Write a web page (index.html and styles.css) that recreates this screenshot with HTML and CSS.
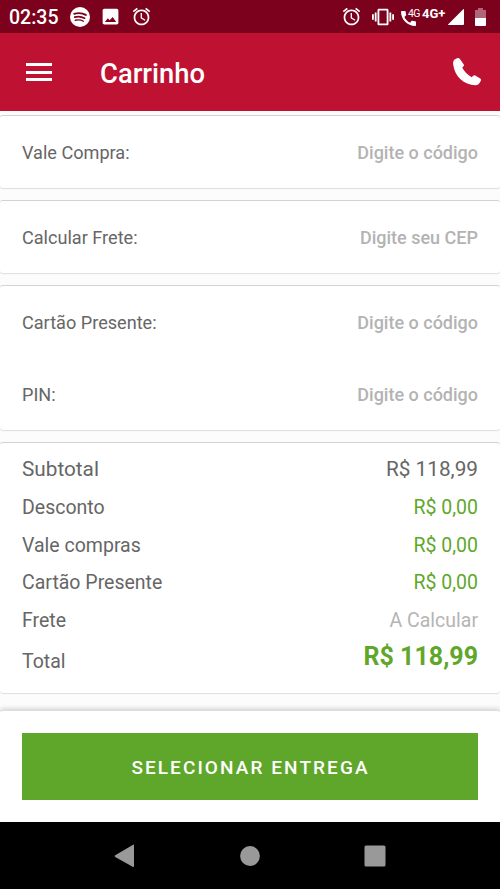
FILE: index.html
```html
<!DOCTYPE html>
<html lang="pt-BR">
<head>
<meta charset="utf-8">
<title>Carrinho</title>
<link rel="stylesheet" href="styles.css">
</head>
<body>
<div class="screen">
  <div class="status">
    <span class="clock">02:35</span>
    <svg class="spotify" viewBox="0 0 24 24"><circle cx="12" cy="12" r="12" fill="#fff"/><g fill="none" stroke="#7c011d" stroke-linecap="round"><path d="M5 8.200c4.700-1.300 10-.9 14 1.300" stroke-width="2.300"/><path d="M5.700 12.200c4-1.100 8.200-.7 11.800 1.300" stroke-width="2"/><path d="M6.300 15.900c3.400-.8 6.800-.5 9.800 1.200" stroke-width="1.600"/></g></svg>
    <svg class="image" viewBox="0 0 24 24"><path d="M21 19V5c0-1.100-.9-2-2-2H5c-1.100 0-2 .9-2 2v14c0 1.100.9 2 2 2h14c1.100 0 2-.9 2-2zM9 14l2 2.200L14.500 12.500l4 5.700H5.500z"/></svg>
    <svg class="alarm" viewBox="0 0 24 24"><path d="M22 5.720l-4.600-3.860-1.290 1.530 4.600 3.860L22 5.720zM7.880 3.390L6.600 1.860 2 5.710l1.290 1.530 4.590-3.850zM12.500 8H11v6l4.750 2.850.75-1.230-4-2.370V8zM12 4c-4.970 0-9 4.030-9 9s4.020 9 9 9c4.970 0 9-4.030 9-9s-4.030-9-9-9zm0 16c-3.870 0-7-3.130-7-7s3.130-7 7-7 7 3.130 7 7-3.130 7-7 7z"/></svg>
    <span class="spacer"></span>
    <svg class="alarm" viewBox="0 0 24 24"><path d="M22 5.720l-4.600-3.860-1.290 1.530 4.600 3.860L22 5.720zM7.880 3.390L6.600 1.860 2 5.710l1.290 1.530 4.590-3.850zM12.500 8H11v6l4.750 2.850.75-1.230-4-2.370V8zM12 4c-4.970 0-9 4.030-9 9s4.020 9 9 9c4.970 0 9-4.030 9-9s-4.030-9-9-9zm0 16c-3.870 0-7-3.130-7-7s3.130-7 7-7 7 3.130 7 7-3.130 7-7 7z"/></svg>
    <svg class="vibrate" viewBox="0 0 24 24"><path d="M0 15h2V9H0v6zm3 2h2V7H3v10zm19-8v6h2V9h-2zm-3 8h2V7h-2v10zM16.500 3h-9C6.670 3 6 3.670 6 4.500v15c0 .83.67 1.500 1.500 1.500h9c.83 0 1.500-.67 1.500-1.500v-15c0-.83-.67-1.500-1.500-1.500zM16 19H8V5h8v14z"/></svg>
    <span class="volte">
      <svg viewBox="3 3 18 18"><path d="M20.010 15.380c-1.230 0-2.420-.2-3.530-.56-.35-.12-.74-.03-1.010.24l-1.570 1.970c-2.830-1.350-5.480-3.900-6.890-6.830l1.950-1.660c.27-.28.35-.67.24-1.020-.37-1.110-.56-2.300-.56-3.530 0-.54-.45-.99-.99-.99H4.190C3.650 3 3 3.240 3 3.990 3 13.280 10.730 21 20.010 21c.71 0 .99-.63.99-1.180v-3.450c0-.54-.45-.99-.99-.99z"/></svg>
      <span class="g-small">4G</span>
    </span>
    <span class="g-big">4G+</span>
    <svg class="signal" viewBox="0 0 16 16"><path d="M15 .4q1-.8 1 .5V15q0 1-1 1H1q-1.500 0-.5-1z"/></svg>
    <svg class="battery" viewBox="0 0 11 18"><path d="M3 0h5v2h3v8H0V2h3z" opacity=".4"/><path d="M0 10h11v7q0 1-1 1H1q-1 0-1-1z"/></svg>
  </div>
  <header class="appbar">
    <div class="menu"><i></i><i></i><i></i></div>
    <h1>Carrinho</h1>
    <svg class="call" viewBox="0 0 28 28"><path d="M1.500 1.500L4 .3Q5.800-.5 6.900 1L10.600 6.200Q11.500 7.500 10.300 8.400L9.200 9.600Q12 15.200 18.600 19.300L20 18Q21 16.900 22.200 17.500L27.200 20.600Q28.500 21.500 27.700 22.900L26.200 25.500Q24.900 27.400 22.500 27.300C11 27 1.500 18.500.2 6.500Q-.3 2.800 1.500 1.500z"/></svg>
  </header>
  <main>
    <section class="card"><div class="field"><label>Vale Compra:</label><span>Digite o código</span></div></section>
    <section class="card"><div class="field"><label>Calcular Frete:</label><span>Digite seu CEP</span></div></section>
    <section class="card"><div class="field"><label>Cartão Presente:</label><span>Digite o código</span></div><div class="field"><label>PIN:</label><span>Digite o código</span></div></section>
    <section class="card summary">
      <div class="row subtotal"><span>Subtotal</span><span>R$ 118,99</span></div>
      <div class="row"><span>Desconto</span><span class="green">R$ 0,00</span></div>
      <div class="row"><span>Vale compras</span><span class="green">R$ 0,00</span></div>
      <div class="row"><span>Cartão Presente</span><span class="green">R$ 0,00</span></div>
      <div class="row"><span>Frete</span><span class="muted">A Calcular</span></div>
      <div class="row total"><span>Total</span><strong>R$ 118,99</strong></div>
    </section>
  </main>
  <footer class="action"><button>SELECIONAR ENTREGA</button></footer>
  <nav class="nav">
    <svg viewBox="0 0 24 24"><path d="M21 1.500v20.500q0 1.500-1.300.8L2.200 12.900q-1.300-.8 0-1.600L19.700.9Q21 0 21 1.500z"/></svg>
    <svg viewBox="0 0 24 24"><circle cx="12" cy="12" r="9.900"/></svg>
    <svg viewBox="0 0 24 24"><rect x="1.500" y="1.500" width="21" height="21" rx="1.500"/></svg>
  </nav>
</div>
</body>
</html>
```
FILE: styles.css
```css
* { box-sizing: border-box; }
body { margin: 0; font-family: Roboto, sans-serif; color: #666; background: #fcfcfc; }
.screen { width: 500px; height: 889px; display: flex; flex-direction: column; overflow: hidden; }
svg { display: block; flex: none; fill: #fff; }

.status { height: 33px; flex: none; background: #7c011d; color: #fff; display: flex; align-items: center; padding: 0 14px 0 9px; }
.clock { width: 61px; font-size: 19.500px; font-weight: 500; line-height: 33px; padding-top: 1px; }
.spotify { width: 20px; height: 20px; }
.image { width: 21px; height: 21px; margin-left: 10px; }
.alarm { width: 21px; height: 21px; margin-left: 10px; }
.spacer { flex: 1; }
.vibrate { width: 22px; height: 22px; margin-left: 10px; }
.volte { position: relative; width: 20px; height: 18px; margin: 1px 0 0 7px; padding-top: 3px; }
.volte svg { width: 15px; height: 15px; }
.g-small { position: absolute; left: 7px; top: 0; font-size: 10.500px; line-height: 11px; letter-spacing: -.6px; }
.g-big { width: 25px; font-size: 13px; line-height: 12px; font-weight: 700; margin: -6px 1px 0; white-space: nowrap; }
.signal { width: 16px; height: 16px; margin-top: 1px; }
.battery { width: 11px; height: 18px; margin-left: 11px; }

.appbar { height: 78px; flex: none; background: #bf1132; color: #fff; display: flex; align-items: center; padding: 0 19px 0 26px; }
.menu { width: 26px; height: 18px; display: flex; flex-direction: column; justify-content: space-between; }
.menu i { height: 3px; background: #fff; }
.appbar h1 { flex: 1; margin: 3px 0 0 48px; font-size: 27.400px; font-weight: 500; }
.call { width: 28px; height: 28px; }

main { padding-top: 4px; flex: 1; display: flex; flex-direction: column; gap: 12px; }
.card { background: #fff; border-radius: 3px; border-top: 1px solid #d2d2d2; box-shadow: 0 1px 1px #ddd; }
.field { height: 72px; padding: 0 22px; display: flex; align-items: center; justify-content: space-between; font-size: 18.100px; }
.field span { color: #b3b3b3; font-weight: 500; font-size: 18px; }
.summary { height: 251px; padding: 6px 22px 0; }
.row { height: 37.500px; display: flex; align-items: center; justify-content: space-between; font-size: 19.500px; }
.subtotal { height: 40px; padding-bottom: 1px; font-size: 20.750px; }
.green { color: #5fa72b; }
.muted { color: #b5b5b5; }
.total { height: 44px; }
.total strong { color: #5fa72b; font-size: 25px; margin-top: -9px; }

.action { height: 112px; flex: none; background: #fff; border-top: 1px solid #ddd; box-shadow: 0 -1px 5px #ccc; padding: 22px; border-radius: 3px 3px 0 0; }
.action button { display: block; width: 456px; height: 67px; border: 0; padding: 1px 0 0 1px; background: #5fa72b; color: #fff; font: 500 19px Roboto, sans-serif; letter-spacing: 2.080px; }
.nav { height: 67px; flex: none; background: #000; display: flex; align-items: center; justify-content: center; gap: 101px; }
.nav svg { width: 24px; height: 24px; fill: #999; }
```
